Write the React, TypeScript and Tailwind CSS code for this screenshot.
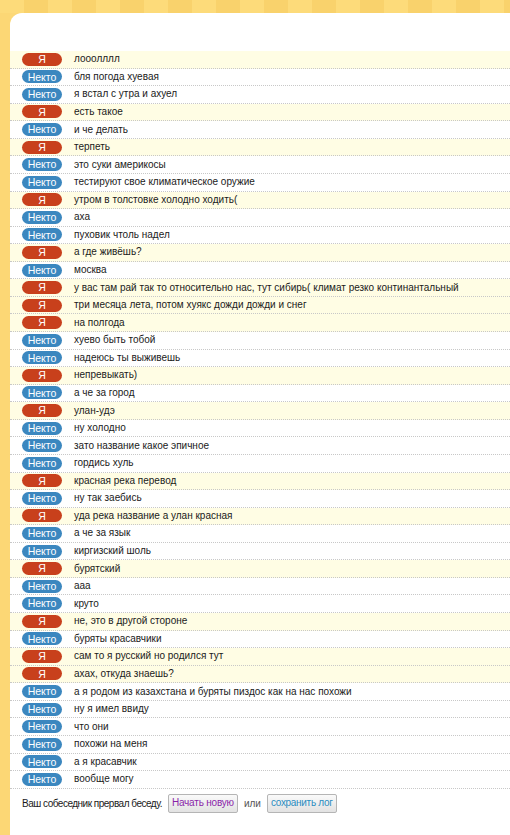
import React from 'react';

type Msg = { me: boolean; text: string };

const log: Msg[] = [
  { me: true, text: 'лооолллл' },
  { me: false, text: 'бля погода хуевая' },
  { me: false, text: 'я встал с утра и ахуел' },
  { me: true, text: 'есть такое' },
  { me: false, text: 'и че делать' },
  { me: true, text: 'терпеть' },
  { me: false, text: 'это суки америкосы' },
  { me: false, text: 'тестируют свое климатическое оружие' },
  { me: true, text: 'утром в толстовке холодно ходить(' },
  { me: false, text: 'аха' },
  { me: false, text: 'пуховик чтоль надел' },
  { me: true, text: 'а где живёшь?' },
  { me: false, text: 'москва' },
  { me: true, text: 'у вас там рай так то относительно нас, тут сибирь( климат резко континантальный' },
  { me: true, text: 'три месяца лета, потом хуякс дожди дожди и снег' },
  { me: true, text: 'на полгода' },
  { me: false, text: 'хуево быть тобой' },
  { me: false, text: 'надеюсь ты выживешь' },
  { me: true, text: 'непревыкать)' },
  { me: false, text: 'а че за город' },
  { me: true, text: 'улан-удэ' },
  { me: false, text: 'ну холодно' },
  { me: false, text: 'зато название какое эпичное' },
  { me: false, text: 'гордись хуль' },
  { me: true, text: 'красная река перевод' },
  { me: false, text: 'ну так заебись' },
  { me: true, text: 'уда река название а улан красная' },
  { me: false, text: 'а че за язык' },
  { me: false, text: 'киргизский шоль' },
  { me: true, text: 'бурятский' },
  { me: false, text: 'ааа' },
  { me: false, text: 'круто' },
  { me: true, text: 'не, это в другой стороне' },
  { me: false, text: 'буряты красавчики' },
  { me: true, text: 'сам то я русский но родился тут' },
  { me: true, text: 'ахах, откуда знаешь?' },
  { me: false, text: 'а я родом из казахстана и буряты пиздос как на нас похожи' },
  { me: false, text: 'ну я имел ввиду' },
  { me: false, text: 'что они' },
  { me: false, text: 'похожи на меня' },
  { me: false, text: 'а я красавчик' },
  { me: false, text: 'вообще могу' },
];

const Row: React.FC<{ msg: Msg }> = ({ msg }) => (
  <div
    className={`flex items-center h-[17.57px] border-b border-dotted border-[#c8c8c8] pl-3 ${
      msg.me ? 'bg-[#fffde4]' : 'bg-white'
    }`}
  >
    <span
      className={`w-10 h-[13px] rounded-[7px] flex items-center justify-center text-white text-[10.5px] leading-none shrink-0 ${
        msg.me ? 'bg-[#c8401c]' : 'bg-[#3b87bf]'
      }`}
    >
      {msg.me ? 'Я' : 'Некто'}
    </span>
    <span className="ml-3 text-[10px] text-[#1a1a1a] whitespace-nowrap leading-none">{msg.text}</span>
  </div>
);

export default function App() {
  return (
    <div
      className="w-[510px] h-[835px] overflow-hidden bg-[#fcd877] flex flex-col"
      style={{ fontFamily: '"Liberation Sans", Arial, sans-serif' }}
    >
      <div className="h-[13px] shrink-0 bg-[repeating-linear-gradient(90deg,#fddb7a_0px,#fddb7a_24px,#f9d26c_24px,#f9d26c_48px)]" />
      <div className="flex-1 flex">
        <div className="w-[10px] shrink-0 bg-[#fcd775]" />
        <div className="flex-1 bg-white rounded-tl-[12px] pt-[38px]">
          <div className="flex flex-col">
            {log.map((m, i) => (
              <Row key={i} msg={m} />
            ))}
          </div>
          <div className="flex items-center pl-3 mt-[5px] text-[10px] text-[#1a1a1a]">
            <span className="tracking-[-0.5px]">Ваш собеседник прервал беседу.</span>
            <button className="ml-[6px] h-[19px] px-[3px] border border-[#b5b5b5] rounded-[2px] bg-[linear-gradient(#fafafa,#e2e2e2)] text-[#8a1fa8] text-[10px] tracking-[-0.2px] leading-none">
              Начать новую
            </button>
            <span className="text-[#555] mx-[6px]">или</span>
            <button className="h-[19px] px-[3px] border border-[#b5b5b5] rounded-[2px] bg-[linear-gradient(#fafafa,#e2e2e2)] text-[#2a8cc0] text-[10px] tracking-[-0.3px] leading-none">
              сохранить лог
            </button>
          </div>
        </div>
      </div>
    </div>
  );
}
